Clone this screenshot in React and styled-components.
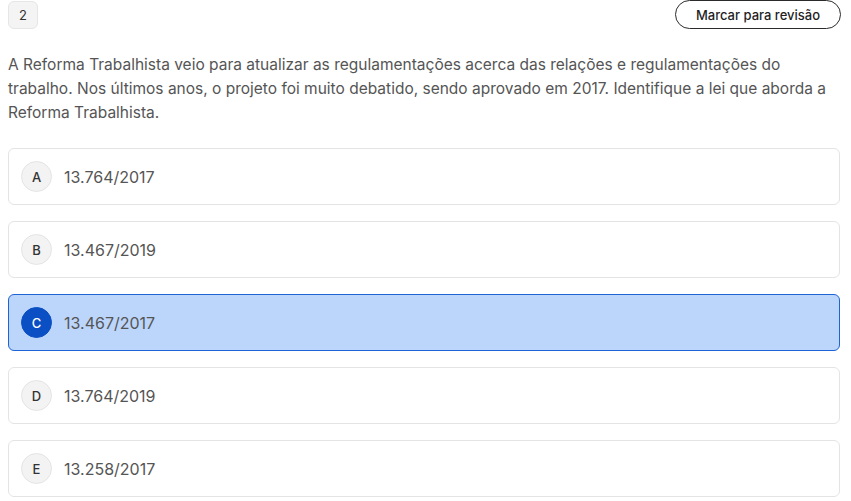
import styled, { createGlobalStyle } from 'styled-components';

const GlobalStyle = createGlobalStyle`
  body {
    margin: 0;
    background: #ffffff;
    font-family: Inter, 'Noto Sans', sans-serif;
  }
`;

const Page = styled.div`
  padding: 1px 11px 0 8px;
`;

const Header = styled.div`
  display: flex;
  flex-flow: row nowrap;
  justify-content: space-between;
  align-items: flex-start;
`;

const NumberBadge = styled.div`
  display: flex;
  align-items: center;
  justify-content: center;
  width: 30px;
  height: 28px;
  box-sizing: border-box;
  background: #f4f4f4;
  border: 1px solid #e6e6e6;
  border-radius: 6px;
  font-size: 13px;
  color: #333333;
`;

const ReviewButton = styled.button`
  height: 29px;
  width: 166px;
  margin-right: -1px;
  margin-top: -1px;
  box-sizing: border-box;
  background: #ffffff;
  border: 1px solid #2b2b2b;
  border-radius: 999px;
  font-family: Inter, 'Noto Sans', sans-serif;
  font-size: 13px;
  font-weight: 500;
  color: #1f1f1f;
  cursor: pointer;
`;

const Statement = styled.p`
  margin: 24px 0 23px;
  font-size: 15.5px;
  line-height: 24px;
  color: #555555;
`;

const Options = styled.div`
  display: flex;
  flex-flow: column nowrap;
  gap: 16px;
`;

const OptionCard = styled.div`
  display: flex;
  flex-flow: row nowrap;
  align-items: center;
  height: 57px;
  box-sizing: border-box;
  padding: 0 12px;
  background: ${({ selected }) => (selected ? '#bcd5fb' : '#ffffff')};
  border: 1px solid ${({ selected }) => (selected ? '#1f64d6' : '#e4e4e4')};
  border-radius: 6px;
`;

const Letter = styled.span`
  display: flex;
  align-items: center;
  justify-content: center;
  width: 31px;
  height: 31px;
  flex-shrink: 0;
  box-sizing: border-box;
  border-radius: 50%;
  background: ${({ selected }) => (selected ? '#0a4fc4' : '#f3f3f3')};
  border: 1px solid ${({ selected }) => (selected ? '#0a4fc4' : '#e4e4e4')};
  color: ${({ selected }) => (selected ? '#ffffff' : '#333333')};
  font-size: 13px;
  font-weight: 500;
`;

const OptionText = styled.span`
  margin-left: 12px;
  font-size: 16px;
  color: #555555;
`;

const options = [
  { letter: 'A', text: '13.764/2017' },
  { letter: 'B', text: '13.467/2019' },
  { letter: 'C', text: '13.467/2017', selected: true },
  { letter: 'D', text: '13.764/2019' },
  { letter: 'E', text: '13.258/2017' },
];

const App = () => {
  return (
    <Page>
      <GlobalStyle />
      <Header>
        <NumberBadge>2</NumberBadge>
        <ReviewButton>Marcar para revisão</ReviewButton>
      </Header>
      <Statement>
        A Reforma Trabalhista veio para atualizar as regulamentações acerca das
        relações e regulamentações do trabalho. Nos últimos anos, o projeto foi
        muito debatido, sendo aprovado em 2017. Identifique a lei que aborda a
        Reforma Trabalhista.
      </Statement>
      <Options>
        {options.map((opt) => (
          <OptionCard key={opt.letter} selected={opt.selected}>
            <Letter selected={opt.selected}>{opt.letter}</Letter>
            <OptionText>{opt.text}</OptionText>
          </OptionCard>
        ))}
      </Options>
    </Page>
  );
};

export default App;
